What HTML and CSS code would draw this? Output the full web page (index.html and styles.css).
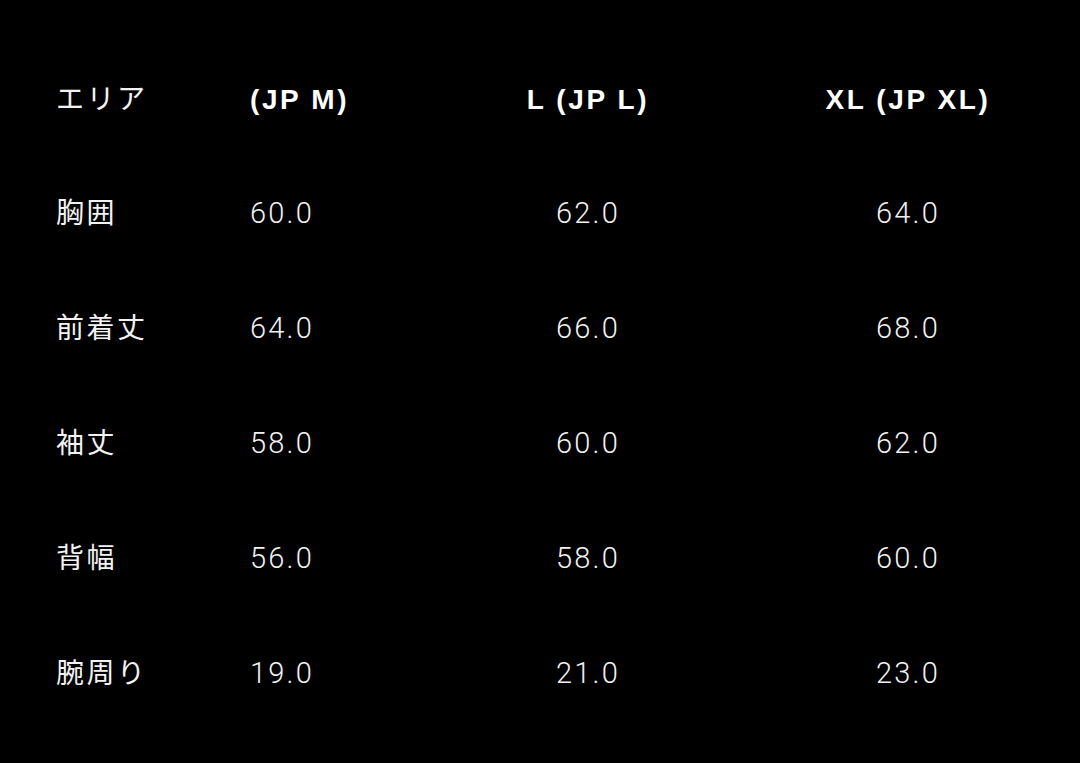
FILE: index.html
```html
<!DOCTYPE html>
<html lang="ja">
<head>
<meta charset="utf-8">
<link rel="stylesheet" href="styles.css">
</head>
<body>
<div class="table">
  <div class="cell label head">エリア</div>
  <div class="cell left head bold">(JP M)</div>
  <div class="cell center head bold">L (JP L)</div>
  <div class="cell center head bold">XL (JP XL)</div>

  <div class="cell label">胸囲</div>
  <div class="cell left num">60.0</div>
  <div class="cell center num">62.0</div>
  <div class="cell center num">64.0</div>

  <div class="cell label">前着丈</div>
  <div class="cell left num">64.0</div>
  <div class="cell center num">66.0</div>
  <div class="cell center num">68.0</div>

  <div class="cell label">袖丈</div>
  <div class="cell left num">58.0</div>
  <div class="cell center num">60.0</div>
  <div class="cell center num">62.0</div>

  <div class="cell label">背幅</div>
  <div class="cell left num">56.0</div>
  <div class="cell center num">58.0</div>
  <div class="cell center num">60.0</div>

  <div class="cell label">腕周り</div>
  <div class="cell left num">19.0</div>
  <div class="cell center num">21.0</div>
  <div class="cell center num">23.0</div>
</div>
</body>
</html>
```
FILE: styles.css
```css
html, body {
  margin: 0;
  padding: 0;
  background: #000;
}
body {
  width: 1080px;
  height: 763px;
  overflow: hidden;
  color: #f2f2f2;
  font-family: "Liberation Sans", "Noto Sans CJK JP", sans-serif;
}
.table {
  display: grid;
  grid-template-columns: 194px 178px 320px 320px;
  grid-template-rows: 113px repeat(5, 115px);
  padding: 43px 0 0 56px;
}
.cell {
  display: flex;
  align-items: center;
  font-size: 28px;
  line-height: 1;
}
.label {
  font-family: "Noto Sans CJK JP", sans-serif;
  font-weight: 400;
  font-size: 28px;
  letter-spacing: 2.5px;
  padding-bottom: 5px;
}
.left {
  justify-content: flex-start;
}
.center {
  justify-content: center;
}
.center.num,
.center.bold {
  padding-right: 0;
}
.bold {
  font-family: "Liberation Sans", sans-serif;
  font-weight: 700;
  font-size: 28px;
  letter-spacing: 2.6px;
  color: #fff;
}
.num {
  font-family: "Roboto", sans-serif;
  font-weight: 300;
  font-size: 29px;
  letter-spacing: 2.2px;
}
```
